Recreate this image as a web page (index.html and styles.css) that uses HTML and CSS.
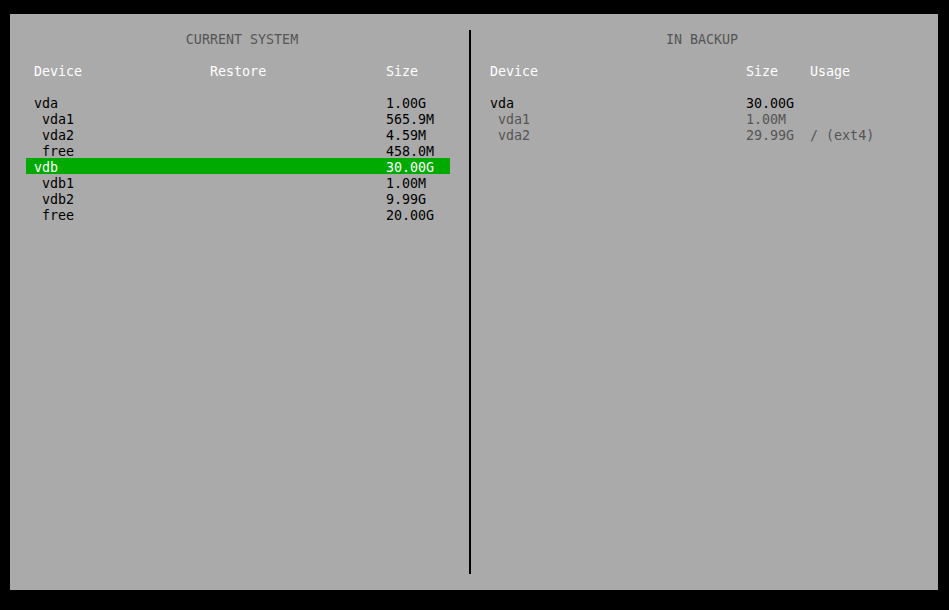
FILE: index.html
```html
<!DOCTYPE html>
<html lang="en">
<head>
<meta charset="utf-8">
<title>Restore</title>
<link rel="stylesheet" href="styles.css">
</head>
<body>
<div class="screen">
  <section class="pane pane-left">
    <div class="title">CURRENT SYSTEM</div>
    <div class="blank"></div>
    <div class="row cols-left head"><span>Device</span><span>Restore</span><span>Size</span></div>
    <div class="blank"></div>
    <div class="row cols-left"><span>vda</span><span></span><span>1.00G</span></div>
    <div class="row cols-left"><span class="sub">vda1</span><span></span><span>565.9M</span></div>
    <div class="row cols-left"><span class="sub">vda2</span><span></span><span>4.59M</span></div>
    <div class="row cols-left"><span class="sub">free</span><span></span><span>458.0M</span></div>
    <div class="row cols-left selected"><span>vdb</span><span></span><span>30.00G</span></div>
    <div class="row cols-left"><span class="sub">vdb1</span><span></span><span>1.00M</span></div>
    <div class="row cols-left"><span class="sub">vdb2</span><span></span><span>9.99G</span></div>
    <div class="row cols-left"><span class="sub">free</span><span></span><span>20.00G</span></div>
  </section>
  <div class="divider"></div>
  <section class="pane pane-right">
    <div class="title">IN BACKUP</div>
    <div class="blank"></div>
    <div class="row cols-right head"><span>Device</span><span>Size</span><span>Usage</span></div>
    <div class="blank"></div>
    <div class="row cols-right"><span>vda</span><span>30.00G</span><span></span></div>
    <div class="row cols-right dim"><span class="sub">vda1</span><span>1.00M</span><span></span></div>
    <div class="row cols-right dim"><span class="sub">vda2</span><span>29.99G</span><span>/ (ext4)</span></div>
  </section>
</div>
</body>
</html>
```
FILE: styles.css
```css
html, body {
  margin: 0;
  background: #000;
}
body {
  padding: 14px 0 0 10px;
  font-family: "DejaVu Sans Mono", "Liberation Mono", monospace;
  font-size: 13.33px;
  color: #000;
}
.screen {
  box-sizing: border-box;
  width: 928px;
  height: 576px;
  background: #aaaaaa;
  padding: 16px;
  display: flex;
  align-items: flex-start;
}
.pane-left {
  width: 432px;
}
.pane-right {
  width: 440px;
}
.divider {
  width: 2px;
  height: 544px;
  background: #000;
  margin: 0 11px;
}
.title,
.row,
.blank {
  height: 16px;
  line-height: 19px;
  white-space: pre;
  overflow: visible;
}
.title {
  text-align: center;
  color: #555555;
}
.row {
  display: grid;
  padding-left: 8px;
}
.cols-left {
  width: 416px;
  grid-template-columns: 176px 176px 1fr;
}
.cols-right {
  width: 432px;
  grid-template-columns: 256px 64px 1fr;
}
.head {
  color: #ffffff;
}
.sub {
  padding-left: 8px;
}
.selected {
  background: #00aa00;
  color: #ffffff;
}
.dim {
  color: #555555;
}
```
